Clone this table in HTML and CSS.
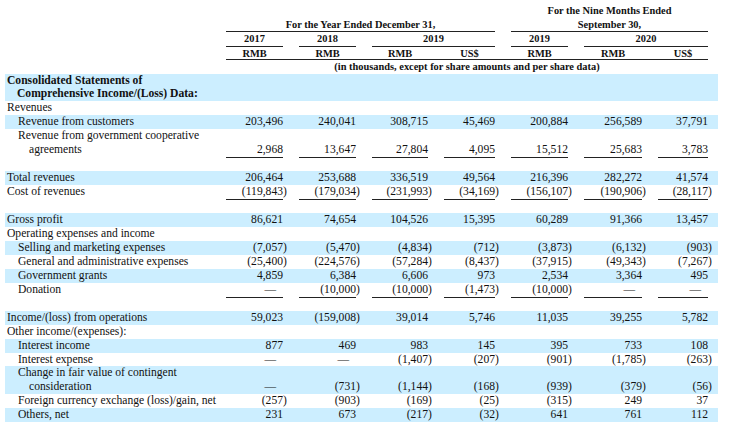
FILE: index.html
```html
<!DOCTYPE html>
<html>
<head>
<meta charset="utf-8">
<link rel="stylesheet" href="styles.css">
</head>
<body>
<div class="sheet">
  <div class="hrow">
    <div class="c-nine">For the Nine Months Ended</div>
  </div>
  <div class="hrow">
    <div class="c-year ul">For the Year Ended December 31,</div>
    <div class="c-nine ul">September 30,</div>
  </div>
  <div class="hrow">
    <div class="c2 ul">2017</div>
    <div class="c3 ul">2018</div>
    <div class="c45 ul">2019</div>
    <div class="c6 ul">2019</div>
    <div class="c78 ul">2020</div>
  </div>
  <div class="hrow">
    <div class="rule"></div>
    <div class="c2 r1">RMB</div>
    <div class="c3 r1">RMB</div>
    <div class="c4 r1">RMB</div>
    <div class="c5 r1">US$</div>
    <div class="c6 r1">RMB</div>
    <div class="c7 r1">RMB</div>
    <div class="c8 r1">US$</div>
  </div>
  <div class="hrow">
    <div class="c-all">(in thousands, except for share amounts and per share data)</div>
  </div>

  <div class="row band">
    <div class="lbl bold h0">Consolidated Statements of<br>Comprehensive Income/(Loss) Data:</div>
  </div>
  <div class="row"><div class="lbl">Revenues</div></div>
  <div class="row band">
    <div class="lbl l1">Revenue from customers</div>
    <div class="n">203,496</div><div class="n">240,041</div><div class="n">308,715</div><div class="n">45,469</div><div class="n">200,884</div><div class="n">256,589</div><div class="n">37,791</div>
  </div>
  <div class="row">
    <div class="lbl h1">Revenue from government cooperative<br>agreements</div>
    <div class="n u">2,968</div><div class="n u">13,647</div><div class="n u">27,804</div><div class="n u">4,095</div><div class="n u">15,512</div><div class="n u">25,683</div><div class="n u">3,783</div>
  </div>
  <div class="row blank"></div>
  <div class="row band">
    <div class="lbl">Total revenues</div>
    <div class="n">206,464</div><div class="n">253,688</div><div class="n">336,519</div><div class="n">49,564</div><div class="n">216,396</div><div class="n">282,272</div><div class="n">41,574</div>
  </div>
  <div class="row">
    <div class="lbl">Cost of revenues</div>
    <div class="n u">(119,843<span class="cp">)</span></div><div class="n u">(179,034<span class="cp">)</span></div><div class="n u">(231,993<span class="cp">)</span></div><div class="n u">(34,169<span class="cp">)</span></div><div class="n u">(156,107<span class="cp">)</span></div><div class="n u">(190,906<span class="cp">)</span></div><div class="n u">(28,117<span class="cp">)</span></div>
  </div>
  <div class="row blank"></div>
  <div class="row band">
    <div class="lbl">Gross profit</div>
    <div class="n">86,621</div><div class="n">74,654</div><div class="n">104,526</div><div class="n">15,395</div><div class="n">60,289</div><div class="n">91,366</div><div class="n">13,457</div>
  </div>
  <div class="row"><div class="lbl">Operating expenses and income</div></div>
  <div class="row band">
    <div class="lbl l1">Selling and marketing expenses</div>
    <div class="n">(7,057<span class="cp">)</span></div><div class="n">(5,470<span class="cp">)</span></div><div class="n">(4,834<span class="cp">)</span></div><div class="n">(712<span class="cp">)</span></div><div class="n">(3,873<span class="cp">)</span></div><div class="n">(6,132<span class="cp">)</span></div><div class="n">(903<span class="cp">)</span></div>
  </div>
  <div class="row">
    <div class="lbl l1">General and administrative expenses</div>
    <div class="n">(25,400<span class="cp">)</span></div><div class="n">(224,576<span class="cp">)</span></div><div class="n">(57,284<span class="cp">)</span></div><div class="n">(8,437<span class="cp">)</span></div><div class="n">(37,915<span class="cp">)</span></div><div class="n">(49,343<span class="cp">)</span></div><div class="n">(7,267<span class="cp">)</span></div>
  </div>
  <div class="row band">
    <div class="lbl l1">Government grants</div>
    <div class="n">4,859</div><div class="n">6,384</div><div class="n">6,606</div><div class="n">973</div><div class="n">2,534</div><div class="n">3,364</div><div class="n">495</div>
  </div>
  <div class="row">
    <div class="lbl l1">Donation</div>
    <div class="n u dash">—</div><div class="n u">(10,000<span class="cp">)</span></div><div class="n u">(10,000<span class="cp">)</span></div><div class="n u">(1,473<span class="cp">)</span></div><div class="n u">(10,000<span class="cp">)</span></div><div class="n u dash">—</div><div class="n u dash">—</div>
  </div>
  <div class="row blank"></div>
  <div class="row band">
    <div class="lbl">Income/(loss) from operations</div>
    <div class="n">59,023</div><div class="n">(159,008<span class="cp">)</span></div><div class="n">39,014</div><div class="n">5,746</div><div class="n">11,035</div><div class="n">39,255</div><div class="n">5,782</div>
  </div>
  <div class="row"><div class="lbl">Other income/(expenses):</div></div>
  <div class="row band">
    <div class="lbl l1">Interest income</div>
    <div class="n">877</div><div class="n">469</div><div class="n">983</div><div class="n">145</div><div class="n">395</div><div class="n">733</div><div class="n">108</div>
  </div>
  <div class="row">
    <div class="lbl l1">Interest expense</div>
    <div class="n dash">—</div><div class="n dash">—</div><div class="n">(1,407<span class="cp">)</span></div><div class="n">(207<span class="cp">)</span></div><div class="n">(901<span class="cp">)</span></div><div class="n">(1,785<span class="cp">)</span></div><div class="n">(263<span class="cp">)</span></div>
  </div>
  <div class="row band">
    <div class="lbl h1">Change in fair value of contingent<br>consideration</div>
    <div class="n dash">—</div><div class="n">(731<span class="cp">)</span></div><div class="n">(1,144<span class="cp">)</span></div><div class="n">(168<span class="cp">)</span></div><div class="n">(939<span class="cp">)</span></div><div class="n">(379<span class="cp">)</span></div><div class="n">(56<span class="cp">)</span></div>
  </div>
  <div class="row">
    <div class="lbl l1">Foreign currency exchange (loss)/gain, net</div>
    <div class="n">(257<span class="cp">)</span></div><div class="n">(903<span class="cp">)</span></div><div class="n">(169<span class="cp">)</span></div><div class="n">(25<span class="cp">)</span></div><div class="n">(315<span class="cp">)</span></div><div class="n">249</div><div class="n">37</div>
  </div>
  <div class="row band">
    <div class="lbl l1">Others, net</div>
    <div class="n u">231</div><div class="n u">673</div><div class="n u">(217<span class="cp">)</span></div><div class="n u">(32<span class="cp">)</span></div><div class="n u">641</div><div class="n u">761</div><div class="n u">112</div>
  </div>
</div>
</body>
</html>
```

FILE: styles.css
```css
html, body {
  margin: 0;
  padding: 0;
  background: #fff;
}
body {
  font-family: "Liberation Serif", "Times New Roman", serif;
  color: #111;
}
.sheet {
  padding: 4px 0 0 5px;
  width: 713px;
}
.hrow, .row {
  display: grid;
  grid-template-columns: 205px 57px 57px 56px 51px 57px 58px 50px;
  column-gap: 16px;
  padding-right: 10px;
}
.hrow {
  font-weight: bold;
  font-size: 10.4px;
  line-height: 13.5px;
  text-align: center;
}
.hrow .ul {
  border-bottom: 1px solid #222;
}
.c-nine { grid-column: 6 / 9; }
.c-year { grid-column: 2 / 6; }
.c-all { grid-column: 2 / 9; }
.c2 { grid-column: 2; }
.c3 { grid-column: 3; }
.c4 { grid-column: 4; }
.c5 { grid-column: 5; }
.c6 { grid-column: 6; }
.c7 { grid-column: 7; }
.c8 { grid-column: 8; }
.c45 { grid-column: 4 / 6; }
.c78 { grid-column: 7 / 9; }
.r1 { grid-row: 1; }
.rule {
  grid-column: 2 / 9;
  grid-row: 1;
  border-bottom: 1px solid #222;
}
.row {
  font-size: 11.6px;
  line-height: 13.95px;
}
.row.blank {
  height: 13.95px;
}
.band {
  background: #cceeff;
}
.lbl {
  grid-column: 1;
  white-space: nowrap;
  padding-left: 2px;
}
.bold {
  font-weight: bold;
}
.l1 {
  padding-left: 13px;
}
.h0 {
  padding-left: 12px;
  text-indent: -10px;
}
.h1 {
  padding-left: 24px;
  text-indent: -11px;
}
.n {
  text-align: right;
  align-self: end;
  white-space: nowrap;
}
.cp {
  margin-right: -0.333em;
}
.dash {
  padding-right: 7px;
}
.u {
  box-shadow: 0 1px 0 #222;
}
```
